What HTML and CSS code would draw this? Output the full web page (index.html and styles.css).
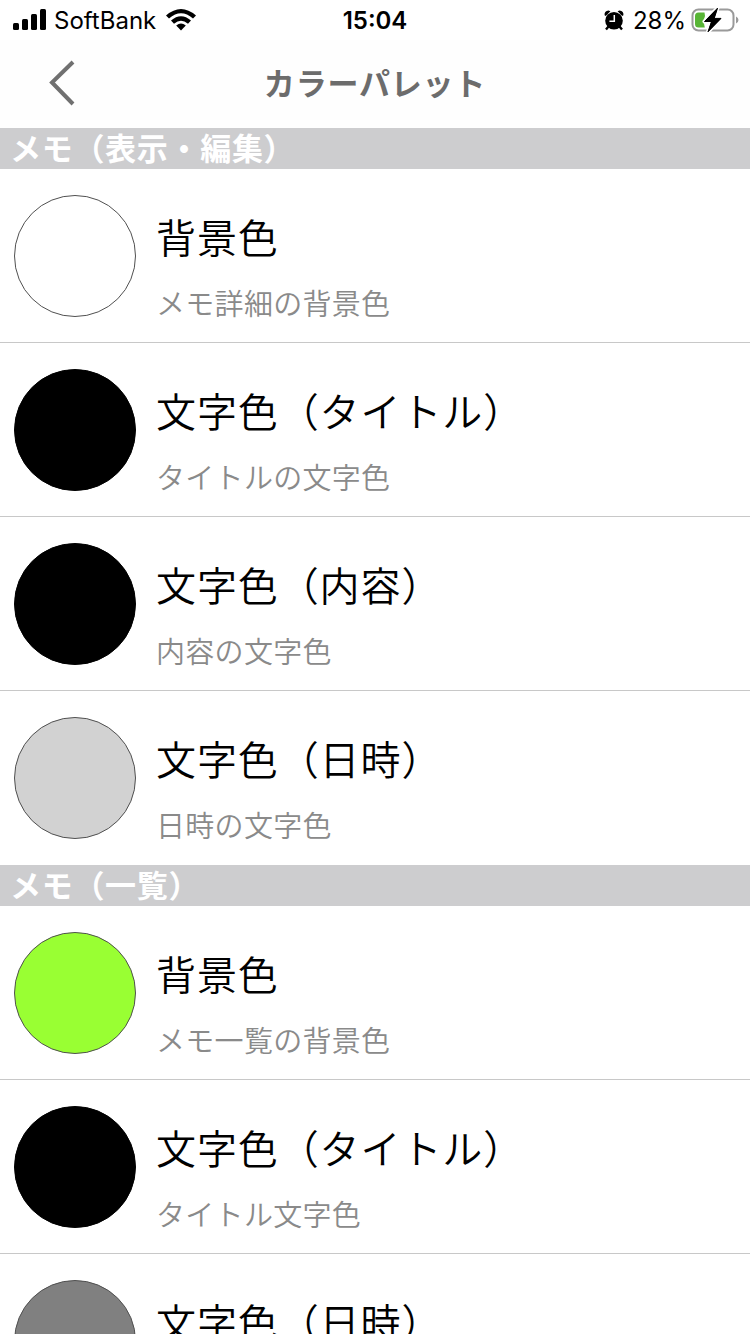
FILE: index.html
```html
<!DOCTYPE html>
<html lang="ja">
<head>
    <meta charset="UTF-8">
    <meta name="viewport" content="width=device-width, initial-scale=1.0">
    <title>カラーパレット</title>
    <link rel="stylesheet" href="styles.css">
</head>
<body>
<div class="status-bar">
    <div class="status-left">
        <svg class="signal" width="34" height="22" viewBox="0 0 34 22">
            <rect x="0" y="14" width="6" height="7" rx="1.5"/>
            <rect x="9" y="10" width="6" height="11" rx="1.5"/>
            <rect x="18" y="5" width="6" height="16" rx="1.5"/>
            <rect x="27" y="0" width="6" height="21" rx="1.5"/>
        </svg>
        <span class="carrier">SoftBank</span>
        <svg class="wifi" width="30" height="22" viewBox="0 0 30 22">
            <path d="M0 6.5Q15 -6.5 30 6.5L27 9.6Q15 -1 3 9.6Z"/>
            <path d="M5 11.6Q15 3 25 11.6L22 14.7Q15 8.6 8 14.7Z"/>
            <path d="M10.2 16.6Q15 12.6 19.8 16.6L15 21.6Z"/>
        </svg>
    </div>
    <div class="clock">15:04</div>
    <div class="status-right">
        <svg class="alarm" width="20" height="21" viewBox="0 0 20 21">
            <circle cx="10" cy="10.8" r="8.8"/>
            <path d="M0.6 5.2Q0 1 4.6 0.4L6.4 1.2L1.8 6ZM19.4 5.2Q20 1 15.4 0.4L13.6 1.2L18.2 6Z"/>
            <path d="M4.5 16.5L2 19.5M15.5 16.5L18 19.5" stroke="#000" stroke-width="2.4"/>
            <path d="M10.3 5V11.2H5.4" fill="none" stroke="#fff" stroke-width="1.5"/>
        </svg>
        <span class="percent">28%</span>
        <svg class="battery" width="48" height="26" viewBox="0 0 48 26">
            <rect x="1.5" y="2.5" width="41" height="21" rx="6" fill="none" stroke="#9a9a9a" stroke-width="2"/>
            <path d="M45 9.5Q47.5 10.5 47.5 13Q47.5 15.5 45 16.5Z" fill="#9a9a9a"/>
            <path d="M7.5 5.5H13.5L14 9L12.5 14L13.8 20.5H7.5Q4 20.5 4 17V9Q4 5.5 7.5 5.5Z" fill="#58b536"/>
            <path d="M26.5 1.2L13.5 14.5H20.5L17 24.8L30 11.4H23.2Z" fill="#000" stroke="#fff" stroke-width="4" paint-order="stroke" stroke-linejoin="round"/>
            <path d="M26.5 1.2L13.5 14.5H20.5L17 24.8L30 11.4H23.2Z" stroke="#000" stroke-width="1" stroke-linejoin="round"/>
        </svg>
    </div>
</div>

<div class="nav-bar">
    <svg class="back" width="28" height="46" viewBox="0 0 28 46">
        <path d="M25 2L4 22.5L25 44"/>
    </svg>
    <h1>カラーパレット</h1>
</div>

<h2>メモ（表示・編集）</h2>
<ul class="color-list">
    <li>
        <div class="swatch white"></div>
        <div class="text">
            <div class="name">背景色</div>
            <div class="detail">メモ詳細の背景色</div>
        </div>
    </li>
    <li>
        <div class="swatch black"></div>
        <div class="text">
            <div class="name">文字色（タイトル）</div>
            <div class="detail">タイトルの文字色</div>
        </div>
    </li>
    <li>
        <div class="swatch black"></div>
        <div class="text">
            <div class="name">文字色（内容）</div>
            <div class="detail">内容の文字色</div>
        </div>
    </li>
    <li>
        <div class="swatch light-gray"></div>
        <div class="text">
            <div class="name">文字色（日時）</div>
            <div class="detail">日時の文字色</div>
        </div>
    </li>
</ul>

<h2>メモ（一覧）</h2>
<ul class="color-list">
    <li>
        <div class="swatch green"></div>
        <div class="text">
            <div class="name">背景色</div>
            <div class="detail">メモ一覧の背景色</div>
        </div>
    </li>
    <li>
        <div class="swatch black"></div>
        <div class="text">
            <div class="name">文字色（タイトル）</div>
            <div class="detail">タイトル文字色</div>
        </div>
    </li>
    <li>
        <div class="swatch gray"></div>
        <div class="text">
            <div class="name">文字色（日時）</div>
        </div>
    </li>
</ul>
</body>
</html>
```

FILE: styles.css
```css
* {
    box-sizing: border-box;
}
body {
    display: flex;
    flex-direction: column;
    margin: 0;
    height: 1334px;
    overflow: hidden;
    background: #fff;
    color: #000;
    font-family: "Noto Sans CJK JP", sans-serif;
}
.status-bar {
    display: grid;
    grid-template-columns: 1fr auto 1fr;
    flex-shrink: 0;
    align-items: center;
    height: 40px;
    padding: 0 11px 0 13px;
    font-family: Inter, sans-serif;
    font-size: 24px;
    line-height: 40px;
}
.status-left,
.status-right {
    display: flex;
    align-items: center;
}
.status-right {
    justify-content: flex-end;
}
.carrier {
    margin: 0 10px 0 7px;
    padding-top: 2px;
    line-height: 38px;
}
.clock {
    padding: 2px 2px 0 0;
    font-weight: 600;
    line-height: 38px;
}
.percent {
    margin: 0 5px 0 9px;
    padding-top: 2px;
    line-height: 38px;
}
.nav-bar {
    display: grid;
    grid-template-columns: 100px 1fr 100px;
    flex-shrink: 0;
    align-items: center;
    height: 88px;
    padding-bottom: 2px;
    background: #fefefe;
}
.back {
    margin-left: 48px;
    fill: none;
    stroke: #707070;
    stroke-width: 4;
}
h1 {
    margin: 0;
    color: #6c6c6c;
    font-size: 31px;
    line-height: 82px;
    letter-spacing: 0.8px;
    text-align: center;
    padding-bottom: 2px;
}
h2 {
    flex-shrink: 0;
    height: 41px;
    margin: 0;
    padding-left: 10px;
    background: #cdcdcf;
    color: #fff;
    font-size: 31px;
    line-height: 37px;
    letter-spacing: 0.7px;
}
.color-list {
    margin: 0;
    padding: 0;
    list-style: none;
}
.color-list li {
    display: flex;
    height: 174px;
    padding: 26px 14px 0;
    border-bottom: 1px solid #c8c8c8;
}
.color-list li:last-child {
    border-bottom: none;
}
.swatch {
    width: 122px;
    height: 122px;
    border: 1px solid #505050;
    border-radius: 50%;
}
.white {
    background: #fff;
}
.black {
    background: #000;
    border-color: #000;
}
.light-gray {
    background: #d2d2d2;
}
.gray {
    background: #808080;
}
.green {
    background: #99ff33;
}
.text {
    padding: 11px 0 0 20px;
}
.name {
    font-size: 40px;
    font-weight: 350;
    line-height: 60px;
    letter-spacing: 0.9px;
}
.detail {
    margin-top: 14px;
    color: #8a8a8a;
    font-size: 29px;
    font-weight: 350;
    line-height: 44px;
    letter-spacing: 0.3px;
}
```
